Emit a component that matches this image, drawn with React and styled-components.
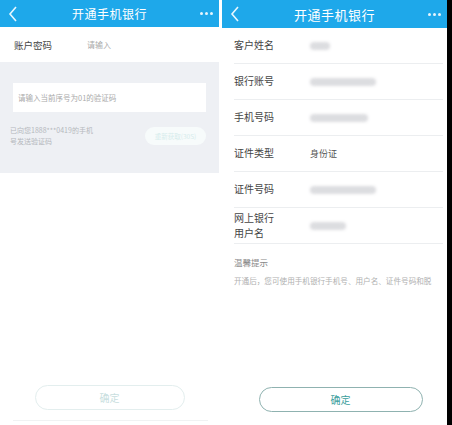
import React from "react";
import styled, { createGlobalStyle } from "styled-components";

const Global = createGlobalStyle`
  html, body { margin: 0; padding: 0; background: #fff; }
  body { font-family: "Noto Sans CJK SC", "Noto Sans", sans-serif; }
`;

const Page = styled.div`
  width: 452px;
  height: 425px;
  display: flex;
  background: #fff;
  overflow: hidden;
`;

const Screen = styled.div`
  width: ${(p) => p.w}px;
  height: 100%;
  display: flex;
  flex-direction: column;
  position: relative;
  background: #fff;
`;

const Gap = styled.div`
  width: ${(p) => p.w}px;
  background: ${(p) => p.bg};
`;

const Header = styled.div`
  height: ${(p) => p.h}px;
  background: #1ea8ea;
  display: flex;
  align-items: center;
  justify-content: space-between;
  padding: 0 6px 0 7px;
  color: #fff;
  flex-shrink: 0;
`;

const Title = styled.div`
  font-size: ${(p) => p.size}px;
  letter-spacing: 0.5px;
`;

const Dots = styled.div`
  display: flex;
  gap: 2px;
  & span {
    width: 3px;
    height: 3px;
    border-radius: 50%;
    background: #e6f5fd;
  }
`;

const Back = () => (
  <svg width="12" height="18" viewBox="0 0 12 18">
    <path d="M9 2 L3 9 L9 16" fill="none" stroke="#e8f7ff" strokeWidth="1.6" />
  </svg>
);

const FieldRow = styled.div`
  height: 35px;
  display: flex;
  align-items: center;
  padding-left: 14px;
  font-size: 9.5px;
  color: #444;
`;

const Hint = styled.span`
  margin-left: 35px;
  font-size: 8px;
  color: #aaa;
`;

const GrayArea = styled.div`
  height: 111px;
  background: #eef0f4;
  padding: 21px 13px 0 13px;
  box-sizing: border-box;
`;

const CodeInput = styled.div`
  height: 29px;
  background: #fff;
  display: flex;
  align-items: center;
  padding-left: 5px;
  font-size: 7.5px;
  color: #aaa;
`;

const SendRow = styled.div`
  display: flex;
  justify-content: space-between;
  align-items: center;
  margin-top: 13px;
  margin-left: -3px;
`;

const SendNote = styled.div`
  font-size: 7px;
  line-height: 10.5px;
  color: #b5b8bd;
  width: 100px;
`;

const Resend = styled.div`
  width: 61px;
  height: 18px;
  border-radius: 9px;
  background: #f7fbfb;
  color: #d6ecec;
  font-size: 6.5px;
  display: flex;
  align-items: center;
  justify-content: center;
`;

const Spacer = styled.div`
  flex: 1;
`;

const ConfirmBtn = styled.div`
  align-self: center;
  width: ${(p) => p.w}px;
  height: 25px;
  border-radius: 13px;
  border: 1px solid ${(p) => p.border};
  color: ${(p) => p.color};
  font-size: 10px;
  display: flex;
  align-items: center;
  justify-content: center;
  box-sizing: border-box;
  margin-left: ${(p) => p.ml}px;
  margin-bottom: ${(p) => p.mb}px;
`;

const BottomLine = styled.div`
  height: 1px;
  margin: 0 11px 4px 13px;
  background: #f0f2f3;
`;

const List = styled.div`
  padding: 0 4px 0 12px;
`;

const InfoRow = styled.div`
  height: 36px;
  box-sizing: border-box;
  border-bottom: 1px solid #eceef0;
  display: flex;
  align-items: center;
  font-size: 10px;
  color: #444;
`;

const Label = styled.div`
  width: 76px;
  line-height: 14.5px;
`;

const Value = styled.div`
  font-size: 9px;
  color: #555;
`;

const Blur = styled.div`
  width: ${(p) => p.w}px;
  height: 8px;
  border-radius: 4px;
  background: #dcdde0;
  filter: blur(1.6px);
`;

const Tips = styled.div`
  padding-top: 12px;
`;

const TipsTitle = styled.div`
  font-size: 8.5px;
  color: #888;
`;

const TipsText = styled.div`
  margin-top: 7px;
  font-size: 7.6px;
  color: #b0b0b0;
  white-space: nowrap;
  overflow: hidden;
`;

const rows = [
  { label: "客户姓名", blur: 20 },
  { label: "银行账号", blur: 66 },
  { label: "手机号码", blur: 58 },
  { label: "证件类型", value: "身份证" },
  { label: "证件号码", blur: 66 },
];

export default function App() {
  return (
    <Page>
      <Global />
      <Screen w={219}>
        <Header h={27}>
          <Back />
          <Title size={12}>开通手机银行</Title>
          <Dots>
            <span />
            <span />
            <span />
          </Dots>
        </Header>
        <FieldRow>
          账户密码
          <Hint>请输入</Hint>
        </FieldRow>
        <GrayArea>
          <CodeInput>请输入当前序号为01的验证码</CodeInput>
          <SendRow>
            <SendNote>
              已向您1888***0419的手机
              <br />
              号发送验证码
            </SendNote>
            <Resend>重新获取(30S)</Resend>
          </SendRow>
        </GrayArea>
        <Spacer />
        <ConfirmBtn w={150} border="#e3eeee" color="#c8dede" ml={0} mb={10}>
          确定
        </ConfirmBtn>
        <BottomLine />
      </Screen>
      <Gap w={3} bg="#fff" />
      <Screen w={225}>
        <Header h={28}>
          <Back />
          <Title size={13}>开通手机银行</Title>
          <Dots>
            <span />
            <span />
            <span />
          </Dots>
        </Header>
        <List>
          {rows.map((r) => (
            <InfoRow key={r.label}>
              <Label>{r.label}</Label>
              {r.value ? <Value>{r.value}</Value> : <Blur w={r.blur} />}
            </InfoRow>
          ))}
          <InfoRow>
            <Label>
              网上银行
              <br />
              用户名
            </Label>
            <Blur w={36} />
          </InfoRow>
          <Tips>
            <TipsTitle>温馨提示</TipsTitle>
            <TipsText>开通后，您可使用手机银行手机号、用户名、证件号码和脱</TipsText>
          </Tips>
        </List>
        <Spacer />
        <ConfirmBtn w={164} border="#8fb2b0" color="#3b9e9c" ml={12} mb={13}>
          确定
        </ConfirmBtn>
      </Screen>
      <Gap w={5} bg="#000" />
    </Page>
  );
}
